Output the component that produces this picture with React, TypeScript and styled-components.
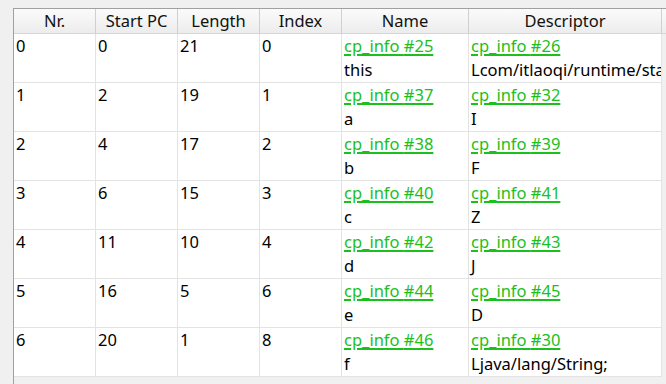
import React from "react";
import styled, { createGlobalStyle } from "styled-components";

const GlobalStyle = createGlobalStyle`
  html, body {
    margin: 0;
    padding: 0;
    background: #f0f0f0;
  }
  body {
    font-family: "Noto Sans", "Noto Sans CJK SC", sans-serif;
  }
`;

const cols = "82px 82px 82px 82px 127px 193px";

const Frame = styled.div`
  width: 666px;
  height: 384px;
  padding: 8px 0 0 13px;
  box-sizing: border-box;
  overflow: hidden;
  background: #f0f0f0;
`;

const Table = styled.div`
  width: 653px;
  height: 376px;
  border-left: 1px solid #a0a0a0;
  border-top: 1px solid #a0a0a0;
  box-sizing: border-box;
  display: flex;
  flex-direction: column;
  overflow: hidden;
`;

const Header = styled.div`
  display: grid;
  grid-template-columns: ${cols} 40px;
  height: 24px;
  background: linear-gradient(#fbfbfb, #ececec);
  border-bottom: 1px solid #d5d5d5;
  flex-shrink: 0;
`;

const HeadCell = styled.div`
  display: flex;
  align-items: center;
  justify-content: center;
  border-right: 1px solid #d0d0d0;
  font-size: 16.5px;
  color: #111;
  line-height: 1;
`;

const Body = styled.div`
  background: #fff;
  width: 648px;
`;

const Row = styled.div`
  display: grid;
  grid-template-columns: ${cols};
  height: 49px;
  box-sizing: border-box;
  border-bottom: 1px solid #e3e3e3;
`;

const Cell = styled.div`
  border-right: 1px solid #e3e3e3;
  padding: 0 0 0 2px;
  font-size: 16.5px;
  line-height: 24px;
  color: #000;
  white-space: nowrap;
  overflow: hidden;
`;

const Link = styled.span`
  display: block;
  color: #1cc01c;
  text-decoration: underline;
  text-decoration-thickness: 2px;
  text-underline-offset: 2px;
`;

const rows = [
  ["0", "0", "21", "0", "#25", "this", "#26", "Lcom/itlaoqi/runtime/sta"],
  ["1", "2", "19", "1", "#37", "a", "#32", "I"],
  ["2", "4", "17", "2", "#38", "b", "#39", "F"],
  ["3", "6", "15", "3", "#40", "c", "#41", "Z"],
  ["4", "11", "10", "4", "#42", "d", "#43", "J"],
  ["5", "16", "5", "6", "#44", "e", "#45", "D"],
  ["6", "20", "1", "8", "#46", "f", "#30", "Ljava/lang/String;"],
];

export default function App() {
  return (
    <Frame>
      <GlobalStyle />
      <Table>
        <Header>
          {["Nr.", "Start PC", "Length", "Index", "Name", "Descriptor", ""].map((h, i) => (
            <HeadCell key={i}>{h}</HeadCell>
          ))}
        </Header>
        <Body>
          {rows.map((r) => (
            <Row key={r[0]}>
              <Cell>{r[0]}</Cell>
              <Cell>{r[1]}</Cell>
              <Cell>{r[2]}</Cell>
              <Cell>{r[3]}</Cell>
              <Cell>
                <Link>cp_info {r[4]}</Link>
                {r[5]}
              </Cell>
              <Cell>
                <Link>cp_info {r[6]}</Link>
                {r[7]}
              </Cell>
            </Row>
          ))}
        </Body>
      </Table>
    </Frame>
  );
}
